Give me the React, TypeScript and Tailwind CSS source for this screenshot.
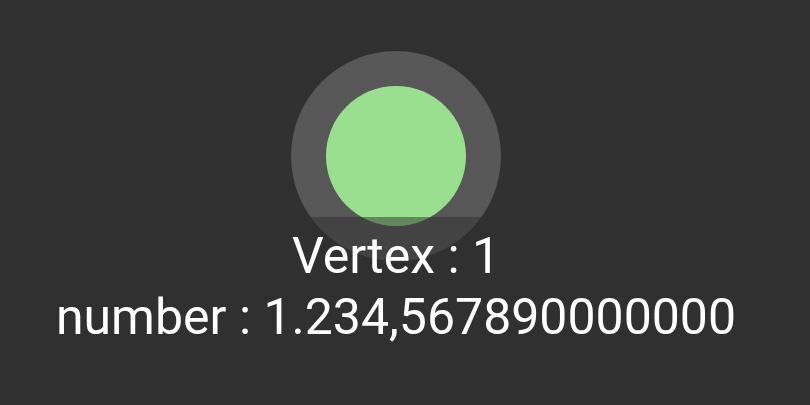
export default function App() {
  return (
    <div className="w-[810px] h-[405px] bg-[#303030] flex flex-col items-center overflow-hidden pr-[18px]" style={{ fontFamily: "Roboto, sans-serif" }}>
      <div className="mt-[51px] w-[210px] h-[210px] rounded-full bg-[#575757] flex items-center justify-center shrink-0">
        <div className="w-[140px] h-[140px] rounded-full bg-[#9ade8f]" />
      </div>
      <div className="relative -mt-[44px] w-full bg-[#303030]/50 flex flex-col items-center text-white text-[50px] leading-[61px] pt-[9px]">
        <div>Vertex : 1</div>
        <div>number : 1.234,567890000000</div>
      </div>
    </div>
  );
}
